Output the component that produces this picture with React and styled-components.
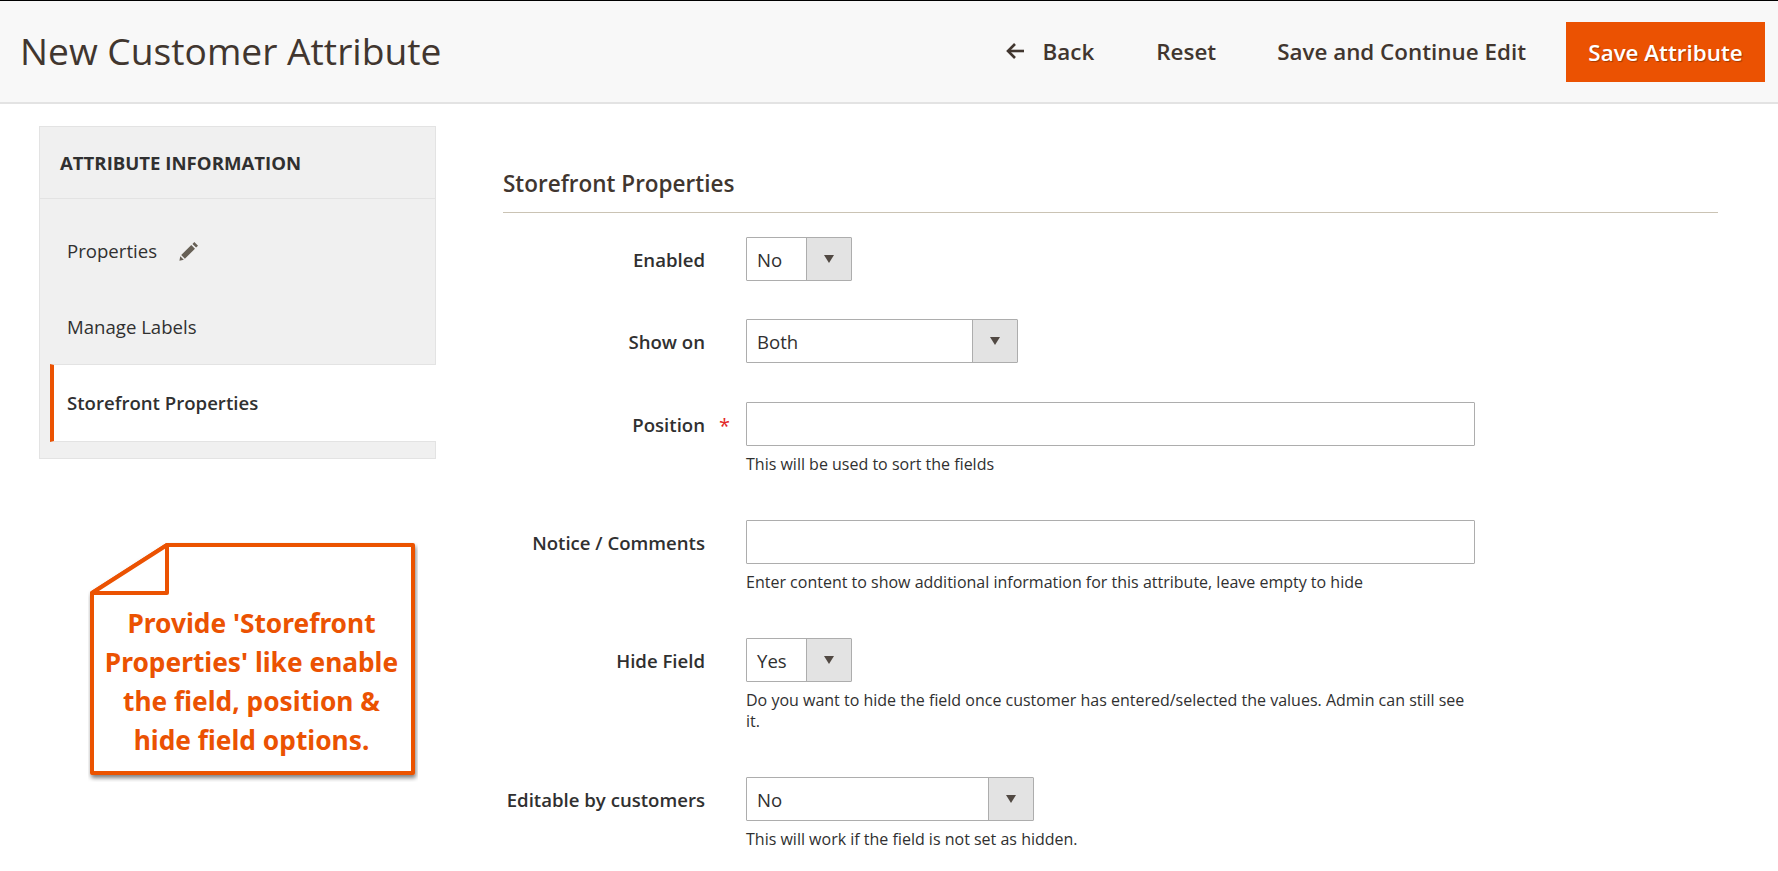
import React from "react";
import styled, { createGlobalStyle } from "styled-components";

const Global = createGlobalStyle`
  html, body { margin: 0; padding: 0; background: #fff; height: 871px; overflow: hidden; }
  body { font-family: "Open Sans", "Noto Sans", sans-serif; color: #303030; }
  * { box-sizing: border-box; }
`;

const Page = styled.div`
  width: 1778px;
  height: 871px;
  overflow: hidden;
  border-top: 1px solid #000;
`;

const Header = styled.header`
  height: 103px;
  background: #f8f8f8;
  border-bottom: 2px solid #e3e3e3;
  display: flex;
  align-items: center;
  padding: 1px 13px 0 20px;
`;

const Title = styled.h1`
  margin: 0 0 4px;
  font-size: 37.2px;
  font-weight: 400;
  color: #41362f;
  flex: 1;
`;

const Action = styled.button`
  border: 0;
  background: none;
  font-family: inherit;
  font-size: 22.4px;
  font-weight: 600;
  color: #41362f;
  padding: 0;
  margin: 0 ${(p) => p.$gap}px 2px 0;
  display: flex;
  align-items: center;
  gap: 18px;
`;

const Primary = styled.button`
  border: 0;
  width: 199px;
  height: 60px;
  background: #eb5202;
  color: #fff;
  font-family: inherit;
  font-size: 22.4px;
  font-weight: 600;
  text-shadow: 1px 1px 1px rgba(0, 0, 0, 0.3);
`;

const Body = styled.main`
  display: grid;
  grid-template-columns: 397px 1215px;
  column-gap: 67px;
  padding: 22px 0 0 39px;
`;

const Side = styled.aside`
  display: flex;
  flex-direction: column;
`;

const Nav = styled.nav`
  height: 333px;
  background: #f0f0f0;
  border: 1px solid #e3e3e3;
  display: flex;
  flex-direction: column;
`;

const NavTitle = styled.div`
  height: 72px;
  border-bottom: 1px solid #e3e3e3;
  padding: 0 0 1px 20px;
  display: flex;
  align-items: center;
  font-size: 18.6px;
  font-weight: 700;
  color: #303030;
`;

const NavItem = styled.div`
  height: ${(p) => p.$h}px;
  display: flex;
  align-items: center;
  gap: 22px;
  font-size: 18.6px;
  padding: ${(p) => p.$pt || 0}px 0 ${(p) => p.$pb || 0}px 27px;
  color: #303030;
`;

const ActiveItem = styled.div`
  height: 78px;
  margin: 0 -1px 0 10px;
  background: #fff;
  border-left: 4px solid #eb5202;
  border-bottom: 1px solid #e3e3e3;
  border-top: 1px solid #e3e3e3;
  display: flex;
  align-items: center;
  padding: 0 0 1px 13px;
  font-size: 18.6px;
  font-weight: 600;
  color: #303030;
`;

const Callout = styled.div`
  position: relative;
  width: 330px;
  height: 240px;
  margin: 83px 0 0 49px;
  padding: 62px 0 0 8px;
  text-align: center;
  font-family: "Noto Sans", "Open Sans", sans-serif;
  font-size: 26.3px;
  font-weight: 700;
  line-height: 39px;
  color: #eb5202;
`;

const CalloutText = styled.div`
  position: relative;
  width: 311px;
`;

const CalloutShape = styled.svg`
  position: absolute;
  left: 0;
  top: 0;
`;

const Content = styled.section`
  display: flex;
  flex-direction: column;
`;

const SectionTitle = styled.h2`
  margin: 0;
  height: 87px;
  padding-top: 42px;
  border-bottom: 1px solid #cac3b4;
  font-size: 22.5px;
  line-height: 32px;
  font-weight: 600;
  color: #41362f;
`;

const Row = styled.div`
  display: grid;
  grid-template-columns: 202px 41px 729px;
  margin-top: ${(p) => p.$mt}px;
`;

const Label = styled.label`
  height: 44px;
  padding-top: 1px;
  font-size: 18.6px;
  font-weight: 600;
  line-height: 44px;
  text-align: right;
  color: #303030;
  white-space: nowrap;
`;

const Star = styled.span`
  color: #e22626;
  font-size: 20px;
  line-height: 48px;
  padding-left: 14px;
`;

const Control = styled.div`
  display: flex;
  flex-direction: column;
  align-items: flex-start;
`;

const Select = styled.div`
  width: ${(p) => p.$w}px;
  height: 44px;
  background: #fff;
  border: 1px solid #adadad;
  border-radius: 1px;
  display: flex;
  font-size: 18.6px;
  color: #303030;
`;

const SelectValue = styled.div`
  flex: 1;
  padding-left: 10px;
  line-height: 43px;
`;

const SelectArrow = styled.div`
  width: 45px;
  background: #e3e3e3;
  border-left: 1px solid #adadad;
  display: flex;
  align-items: center;
  justify-content: center;
  &::after {
    content: "";
    border-left: 5px solid transparent;
    border-right: 5px solid transparent;
    border-top: 8px solid #514943;
  }
`;

const Input = styled.div`
  width: 729px;
  height: 44px;
  background: #fff;
  border: 1px solid #adadad;
  border-radius: 1px;
`;

const Note = styled.div`
  font-size: 16px;
  line-height: 21px;
  color: #303030;
  margin-top: 8px;
  width: 729px;
`;

const Pencil = () => (
  <svg width="21" height="21" viewBox="0 0 20 20" fill="#676056">
    <path d="M14.6 1.9l3.5 3.5-1.8 1.8-3.5-3.5z M11.7 4.8l3.5 3.5-9.6 9.6-3.5-3.5z M1.2 15.4l3.4 3.4-4.2 1z" />
  </svg>
);

const BackArrow = () => (
  <svg width="20" height="18" viewBox="0 0 20 18" fill="none" stroke="#41362f" strokeWidth="2.6">
    <path d="M19 9H3" />
    <path d="M10 2L3 9l7 7" />
  </svg>
);

const Field = ({ label, mt, required, children }) => (
  <Row $mt={mt}>
    <Label>{label}</Label>
    {required ? <Star>*</Star> : <span />}
    <Control>{children}</Control>
  </Row>
);

const Drop = ({ w, value }) => (
  <Select $w={w}>
    <SelectValue>{value}</SelectValue>
    <SelectArrow />
  </Select>
);

export default function App() {
  return (
    <Page>
      <Global />
      <Header>
        <Title>New Customer Attribute</Title>
        <Action $gap={62}>
          <BackArrow />
          Back
        </Action>
        <Action $gap={61}>Reset</Action>
        <Action $gap={40}>Save and Continue Edit</Action>
        <Primary>Save Attribute</Primary>
      </Header>
      <Body>
        <Side>
          <Nav>
            <NavTitle>ATTRIBUTE INFORMATION</NavTitle>
            <NavItem $h={91} $pt={12}>
              Properties
              <Pencil />
            </NavItem>
            <NavItem $h={74} $pb={2}>Manage Labels</NavItem>
            <ActiveItem>Storefront Properties</ActiveItem>
          </Nav>
          <Callout>
            <CalloutShape width="330" height="240" viewBox="0 0 330 240">
              <defs>
                <filter id="calloutShadow" x="-5%" y="-5%" width="110%" height="110%">
                  <feDropShadow dx="1" dy="3" stdDeviation="2" floodColor="#000" floodOpacity="0.5" />
                </filter>
              </defs>
              <path
                d="M79 3H325V231H4V51z"
                fill="#fff"
                stroke="#eb5202"
                strokeWidth="4"
                strokeLinejoin="round"
                filter="url(#calloutShadow)"
              />
              <path
                d="M79 3V51H4z"
                fill="#fff"
                stroke="#eb5202"
                strokeWidth="4"
                strokeLinejoin="round"
              />
            </CalloutShape>
            <CalloutText>
              Provide 'Storefront Properties' like enable the field, position &amp; hide field options.
            </CalloutText>
          </Callout>
        </Side>
        <Content>
          <SectionTitle>Storefront Properties</SectionTitle>
          <Field label="Enabled" mt={24}>
            <Drop w={106} value="No" />
          </Field>
          <Field label="Show on" mt={38}>
            <Drop w={272} value="Both" />
          </Field>
          <Field label="Position" mt={39} required>
            <Input />
            <Note>This will be used to sort the fields</Note>
          </Field>
          <Field label="Notice / Comments" mt={45}>
            <Input />
            <Note>Enter content to show additional information for this attribute, leave empty to hide</Note>
          </Field>
          <Field label="Hide Field" mt={45}>
            <Drop w={106} value="Yes" />
            <Note>Do you want to hide the field once customer has entered/selected the values. Admin can still see it.</Note>
          </Field>
          <Field label="Editable by customers" mt={45}>
            <Drop w={288} value="No" />
            <Note>This will work if the field is not set as hidden.</Note>
          </Field>
        </Content>
      </Body>
    </Page>
  );
}
